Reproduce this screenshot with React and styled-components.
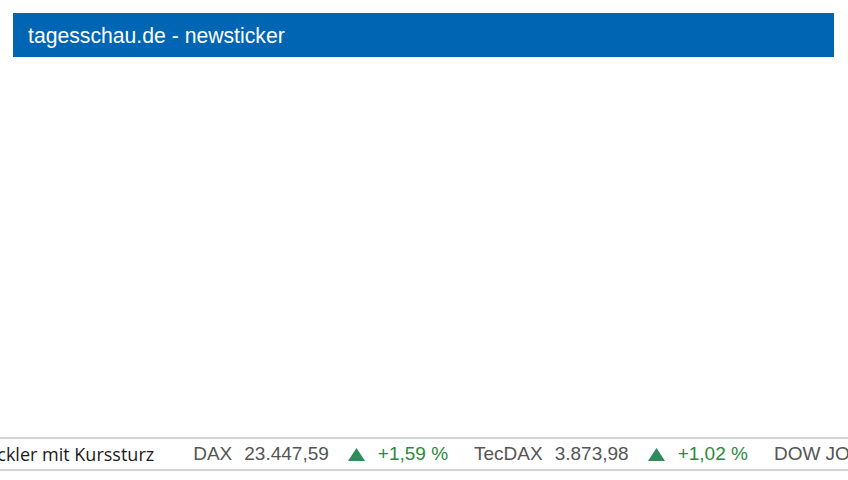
import styled, { createGlobalStyle } from "styled-components";

const GlobalStyle = createGlobalStyle`
  html, body {
    margin: 0;
    padding: 0;
    background: #ffffff;
  }
`;

const quotes = [
  { name: "DAX", value: "23.447,59", change: "+1,59 %" },
  { name: "TecDAX", value: "3.873,98", change: "+1,02 %" },
  { name: "DOW JONES", value: "46.758,28", change: "+0,51 %" },
];

const App = () => {
  return (
    <>
      <GlobalStyle />
      <Page>
        <Header>
          <Title>tagesschau.de - newsticker</Title>
        </Header>
        <Spacer />
        <Ticker>
          <Track>
            <Headline>Chinesischer Autoentwickler mit Kurssturz</Headline>
            {quotes.map((q) => (
              <Quote key={q.name}>
                <Name>{q.name}</Name>
                <Value>{q.value}</Value>
                <Arrow viewBox="0 0 17 13">
                  <polygon points="8.5,0 17,13 0,13" />
                </Arrow>
                <Change>{q.change}</Change>
              </Quote>
            ))}
          </Track>
        </Ticker>
      </Page>
    </>
  );
};

const Page = styled.div`
  display: flex;
  flex-direction: column;
  height: 480px;
  box-sizing: border-box;
  padding: 13px 0 9px 0;
  font-family: "Liberation Sans", Arial, sans-serif;
`;

const Header = styled.header`
  margin: 0 14px 0 13px;
  height: 44px;
  box-sizing: border-box;
  padding: 1px 0 0 15px;
  background: #0065b3;
  display: flex;
  align-items: center;
`;

const Title = styled.h1`
  margin: 0;
  font-size: 21.2px;
  font-weight: normal;
  color: #ffffff;
`;

const Spacer = styled.div`
  flex: 1;
`;

const Ticker = styled.div`
  height: 30px;
  border-top: 2px solid #d4d4d4;
  border-bottom: 2px solid #d4d4d4;
  overflow: hidden;
  display: flex;
  align-items: center;
`;

const Track = styled.div`
  display: flex;
  align-items: center;
  white-space: nowrap;
  transform: translateX(-200px);
`;

const Headline = styled.span`
  font-family: "Open Sans", "Noto Sans", sans-serif;
  font-size: 18px;
  color: #1a1a1a;
  margin-right: 39px;
`;

const Quote = styled.span`
  display: inline-flex;
  align-items: center;
  font-size: 19px;
  margin-right: 26px;
`;

const Name = styled.span`
  color: #555555;
  margin-right: 12px;
`;

const Value = styled.span`
  color: #555555;
  margin-right: 19px;
`;

const Arrow = styled.svg`
  width: 17px;
  height: 13px;
  fill: #2e8b5a;
  margin-right: 13px;
`;

const Change = styled.span`
  color: #2a8a3c;
`;

export default App;
